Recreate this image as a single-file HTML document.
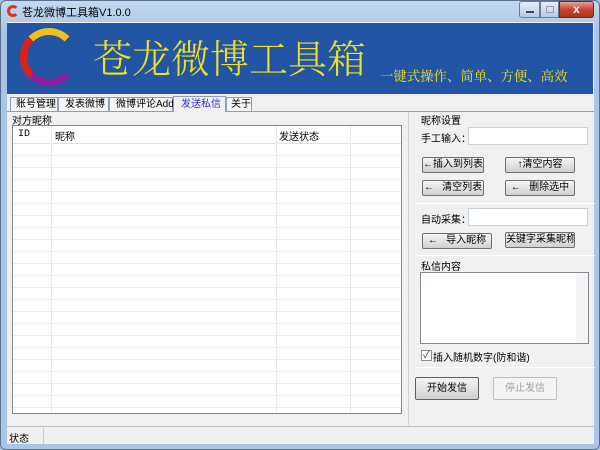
<!DOCTYPE html>
<html><head><meta charset="utf-8"><style>
*{margin:0;padding:0;box-sizing:border-box}
body{width:600px;height:450px;overflow:hidden;background:#aac4e2;font-family:"Liberation Sans","Noto Sans CJK SC",sans-serif;font-size:10px;color:#000;position:relative;white-space:nowrap}
.a{position:absolute}
.btn{position:absolute;border:1px solid #707070;border-radius:2px;background:linear-gradient(#f4f4f4,#e2e2e2 50%,#d0d0d0);text-align:center;font-size:10px;line-height:14px;overflow:hidden}
.inp{position:absolute;background:#fff;border:1px solid #c8d0da}
.sep{position:absolute;height:1px;background:#d8d8d8;border-bottom:1px solid #fff}
</style></head><body>
<div class="a" style="left:0;top:0;width:600px;height:450px;border-radius:6px;background:linear-gradient(#c5d9ef,#a9c6e6 30px,#a9c6e6);border:1px solid #5a6f8a"></div>
<div class="a" style="left:7px;top:5px;width:12px;height:12px;border-radius:50%;border:3px solid #e03020;border-right-color:transparent"></div>
<div class="a" style="left:22px;top:4px;font-size:11px">苍龙微博工具箱V1.0.0</div>
<div class="a" style="left:519px;top:1px;width:21px;height:17px;border:1px solid #6a7d96;border-radius:3px 0 0 3px;background:linear-gradient(#e6eef8,#b8cbe2)"><div class="a" style="left:6px;top:9px;width:8px;height:2px;background:#fff;border:1px solid #445"></div></div>
<div class="a" style="left:540px;top:1px;width:19px;height:17px;border:1px solid #6a7d96;background:linear-gradient(#e6eef8,#b8cbe2)"><div class="a" style="left:5px;top:4px;width:8px;height:7px;border:1px solid #99a"></div></div>
<div class="a" style="left:559px;top:1px;width:35px;height:17px;border:1px solid #6a2a20;border-radius:0 3px 3px 0;background:linear-gradient(#e8a090,#c84430 50%,#b03020);color:#fff;font-weight:bold;text-align:center;line-height:15px;font-size:12px">x</div>
<div class="a" style="left:7px;top:22px;width:587px;height:422px;background:#f0f0f0"></div>
<div class="a" style="left:7px;top:23px;width:586px;height:71px;background:#2255a4"></div>
<div class="a" style="left:20px;top:28px;width:58px;height:58px;border-radius:50%;border:7px solid #e02018;border-top-color:#f0c020;border-right-color:transparent;border-bottom-color:#9020a0"></div>
<div class="a" style="left:93px;top:34px;font-size:39px;line-height:46px;color:#f0e020;font-family:'Noto Serif CJK SC','Liberation Serif',serif;font-weight:300">苍龙微博工具箱</div>
<div class="a" style="left:380px;top:66px;font-size:13.4px;line-height:20px;color:#f0e020;font-family:'Noto Serif CJK SC',serif">一键式操作、简单、方便、高效</div>
<div class="a" style="left:7px;top:111px;width:587px;height:1px;background:#8e9fb5"></div>
<div class="a" style="left:10px;top:97px;width:48px;height:14px;border:1px solid #8e9fb5;border-bottom:0;background:#f4f4f4;padding-left:5px;line-height:13px">账号管理</div>
<div class="a" style="left:58px;top:97px;width:51px;height:14px;border:1px solid #8e9fb5;border-bottom:0;background:#f4f4f4;padding-left:6px;line-height:13px">发表微博</div>
<div class="a" style="left:109px;top:97px;width:64px;height:14px;border:1px solid #8e9fb5;border-bottom:0;background:#f4f4f4;padding-left:6px;line-height:13px;font-size:10px">微博评论Add</div>
<div class="a" style="left:173px;top:96px;width:53px;height:16px;border:1px solid #8e9fb5;border-bottom:0;background:#f0f0f0;padding-left:7px;line-height:15px;color:#3030e0">发送私信</div>
<div class="a" style="left:226px;top:97px;width:26px;height:14px;border:1px solid #8e9fb5;border-bottom:0;background:#f4f4f4;padding-left:4px;line-height:13px">关于</div>
<div class="a" style="left:12px;top:112px">对方昵称</div>
<div class="a" style="left:12px;top:125px;width:390px;height:289px;background:#fff;border:1px solid #828790;
background-image:repeating-linear-gradient(#fff 0 11px,#eeeeee 11px 12px);background-position:0 18px;background-repeat:repeat-y"></div>
<div class="a" style="left:13px;top:126px;width:388px;height:18px;background:#fff;border-bottom:1px solid #e0e0e0"></div>
<div class="a" style="left:51px;top:126px;width:1px;height:287px;background:#eaeaea"></div>
<div class="a" style="left:276px;top:126px;width:1px;height:287px;background:#eaeaea"></div>
<div class="a" style="left:350px;top:126px;width:1px;height:287px;background:#eaeaea"></div>
<div class="a" style="left:18px;top:129px;font-size:10px;font-family:'Liberation Mono',monospace">ID</div>
<div class="a" style="left:55px;top:128px">昵称</div>
<div class="a" style="left:279px;top:128px">发送状态</div>
<div class="a" style="left:408px;top:112px;width:1px;height:313px;background:#d0d0d0"></div>
<div class="a" style="left:421px;top:112px">昵称设置</div>
<div class="a" style="left:421px;top:130px">手工输入：</div>
<div class="inp" style="left:468px;top:127px;width:120px;height:18px"></div>
<div class="btn" style="left:422px;top:157px;width:62px;height:16px">←插入到列表</div>
<div class="btn" style="left:505px;top:157px;width:70px;height:16px">↑清空内容</div>
<div class="btn" style="left:422px;top:180px;width:62px;height:16px">←&nbsp;&nbsp;&nbsp;清空列表</div>
<div class="btn" style="left:505px;top:180px;width:70px;height:16px">←&nbsp;&nbsp;&nbsp;删除选中</div>
<div class="sep" style="left:415px;top:203px;width:180px"></div>
<div class="a" style="left:421px;top:211px">自动采集：</div>
<div class="inp" style="left:468px;top:208px;width:120px;height:18px"></div>
<div class="btn" style="left:422px;top:233px;width:70px;height:16px">←&nbsp;&nbsp;&nbsp;导入昵称</div>
<div class="btn" style="left:505px;top:232px;width:70px;height:16px">关键字采集昵称</div>
<div class="sep" style="left:415px;top:255px;width:180px"></div>
<div class="a" style="left:421px;top:258px">私信内容</div>
<div class="a" style="left:420px;top:272px;width:169px;height:72px;background:#fff;border:1px solid #828790"></div>
<div class="a" style="left:576px;top:273px;width:12px;height:70px;background:#f4f4f4"></div>
<div class="a" style="left:421px;top:350px;width:11px;height:11px;border:1px solid #8e8f8f;background:#fff;color:#2040a0;font-size:10px;line-height:9px;text-align:center">✓</div>
<div class="a" style="left:433px;top:349px">插入随机数字(防和谐)</div>
<div class="sep" style="left:415px;top:367px;width:180px"></div>
<div class="btn" style="left:415px;top:377px;width:64px;height:23px;line-height:21px;border-color:#606060">开始发信</div>
<div class="btn" style="left:493px;top:377px;width:64px;height:23px;line-height:21px;border-color:#c0c0c0;background:#f4f4f4;color:#a0a0a0">停止发信</div>
<div class="a" style="left:7px;top:426px;width:587px;height:1px;background:#c0c0c0"></div>
<div class="a" style="left:7px;top:427px;width:587px;height:17px;background:#f0eeee"></div>
<div class="a" style="left:43px;top:428px;width:1px;height:16px;background:#c8c8c8"></div>
<div class="a" style="left:9px;top:430px">状态</div>
</body></html>
